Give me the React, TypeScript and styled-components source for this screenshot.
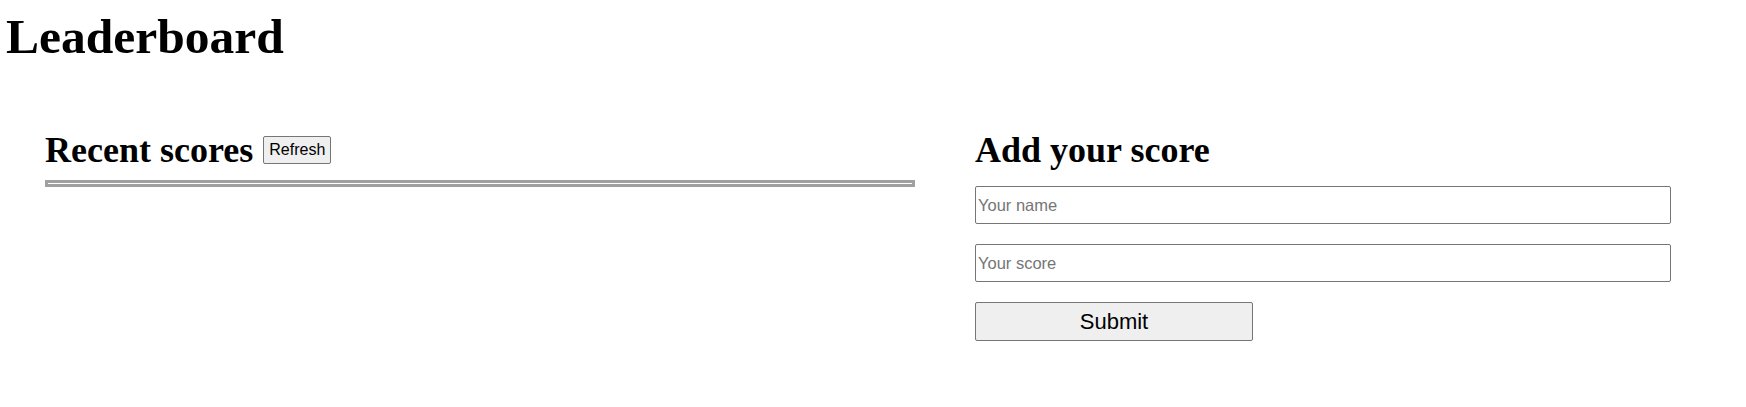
import styled, { createGlobalStyle } from "styled-components";

const GlobalStyle = createGlobalStyle`
  html, body {
    margin: 0;
    padding: 0;
    background: #fff;
    color: #000;
    font-family: "Liberation Serif", "Times New Roman", serif;
  }
`;

const Page = styled.div`
  width: 1746px;
`;

const Title = styled.h1`
  margin: 9px 0 0 6px;
  font-size: 49.5px;
  line-height: 56px;
  font-weight: bold;
`;

const Columns = styled.main`
  display: grid;
  grid-template-columns: 870px 696px;
  column-gap: 60px;
  padding-left: 45px;
  margin-top: 65px;
  align-items: start;
`;

const Section = styled.section`
  display: flex;
  flex-direction: column;
`;

const HeadingRow = styled.div`
  display: flex;
  align-items: center;
  gap: 10px;
`;

const Heading = styled.h2`
  margin: 0;
  font-size: 36px;
  line-height: 40px;
  font-weight: bold;
`;

const Button = styled.button<{ $big?: boolean }>`
  box-sizing: border-box;
  font-family: "Liberation Sans", Arial, sans-serif;
  font-size: ${(p) => (p.$big ? "22px" : "16px")};
  height: ${(p) => (p.$big ? "39px" : "28px")};
  width: ${(p) => (p.$big ? "278px" : "auto")};
  padding: 0 5px;
  color: #000;
  background: #efefef;
  border: 1px solid #767676;
  border-radius: 2px;
`;

const ScoreTable = styled.div`
  margin-top: 10px;
  height: 1px;
  border: 3px solid #a0a0a0;
`;

const Form = styled.form`
  display: flex;
  flex-direction: column;
  align-items: flex-start;
  gap: 20px;
  margin-top: 16px;
`;

const Input = styled.input`
  box-sizing: border-box;
  width: 696px;
  height: 38px;
  padding: 1px 2px;
  font-family: "Liberation Sans", Arial, sans-serif;
  font-size: 16.5px;
  border: 1px solid #767676;
  border-radius: 2px;
  &::placeholder {
    color: #757575;
  }
`;

export default function App() {
  return (
    <Page>
      <GlobalStyle />
      <Title>Leaderboard</Title>
      <Columns>
        <Section>
          <HeadingRow>
            <Heading>Recent scores</Heading>
            <Button type="button">Refresh</Button>
          </HeadingRow>
          <ScoreTable />
        </Section>
        <Section>
          <Heading>Add your score</Heading>
          <Form onSubmit={(e) => e.preventDefault()}>
            <Input placeholder="Your name" />
            <Input placeholder="Your score" />
            <Button $big type="submit">
              Submit
            </Button>
          </Form>
        </Section>
      </Columns>
    </Page>
  );
}
